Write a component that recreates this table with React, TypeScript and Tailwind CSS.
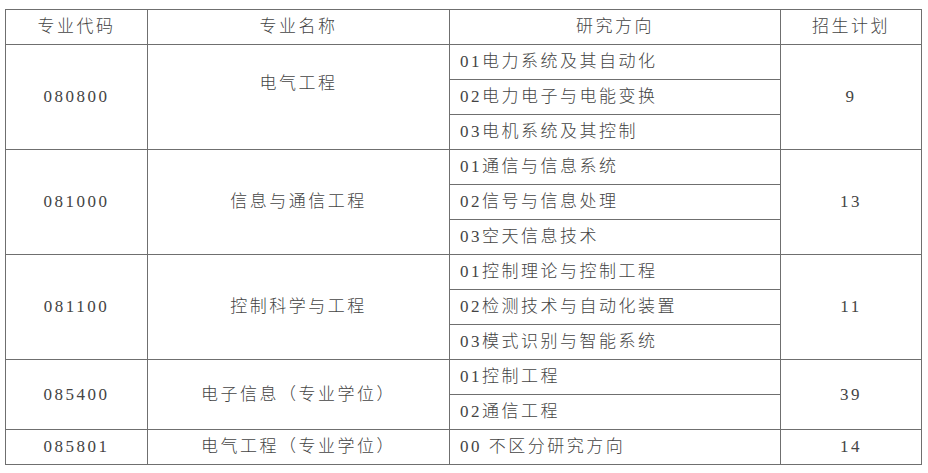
import React from "react";

type Group = {
  code: string;
  name: string;
  dirs: string[];
  plan: string;
  nameTop?: boolean;
};

const groups: Group[] = [
  {
    code: "080800",
    name: "电气工程",
    dirs: ["01电力系统及其自动化", "02电力电子与电能变换", "03电机系统及其控制"],
    plan: "9",
    nameTop: true,
  },
  {
    code: "081000",
    name: "信息与通信工程",
    dirs: ["01通信与信息系统", "02信号与信息处理", "03空天信息技术"],
    plan: "13",
  },
  {
    code: "081100",
    name: "控制科学与工程",
    dirs: ["01控制理论与控制工程", "02检测技术与自动化装置", "03模式识别与智能系统"],
    plan: "11",
  },
  {
    code: "085400",
    name: "电子信息（专业学位）",
    dirs: ["01控制工程", "02通信工程"],
    plan: "39",
  },
  {
    code: "085801",
    name: "电气工程（专业学位）",
    dirs: ["00 不区分研究方向"],
    plan: "14",
  },
];

const c = "border-r border-b border-[#6f6f6f] flex items-center justify-center";

export default function App() {
  return (
    <div className="w-[928px] h-[473px] bg-white overflow-hidden pt-[9px] pl-[5px]">
      <div className="w-[917px] border-l border-t border-[#6f6f6f] text-[17px] tracking-[2.5px] text-[#444] font-['Liberation_Serif','Noto_Sans_CJK_SC',serif] font-light">
        <div className="flex h-[35px]">
          <div className={`${c} w-[142px]`}>专业代码</div>
          <div className={`${c} w-[302px]`}>专业名称</div>
          <div className={`${c} w-[331px]`}>研究方向</div>
          <div className={`${c} w-[141px]`}>招生计划</div>
        </div>
        {groups.map((g) => (
          <div key={g.code} className="flex">
            <div className={`${c} w-[142px]`}>{g.code}</div>
            <div
              className={
                g.nameTop
                  ? "border-r border-b border-[#6f6f6f] flex items-start justify-center pt-[27px] w-[302px]"
                  : `${c} w-[302px]`
              }
            >
              <span className="leading-[24px]">{g.name}</span>
            </div>
            <div className="flex flex-col w-[331px]">
              {g.dirs.map((d) => (
                <div
                  key={d}
                  className="h-[35px] border-r border-b border-[#6f6f6f] flex items-center pl-[10px] whitespace-pre"
                >
                  {d}
                </div>
              ))}
            </div>
            <div className={`${c} w-[141px]`}>{g.plan}</div>
          </div>
        ))}
      </div>
    </div>
  );
}
